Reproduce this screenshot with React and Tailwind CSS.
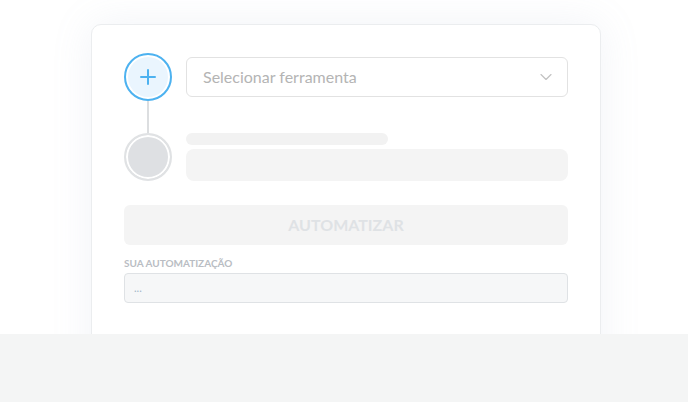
import { ChevronDown, Plus } from 'lucide-react';

export default function App() {
  return (
    <div className="w-[688px] h-[402px] bg-white">
      {/* top area with card, cut off by the gray band */}
      <div className="h-[334px] overflow-hidden pt-6 font-['Lato',sans-serif]">
        <div className="ml-[91px] w-[510px] h-[360px] rounded-[10px] border border-[#ebedef] bg-white px-8 pt-7 shadow-[0_0_40px_rgba(150,165,190,0.13)]">
          {/* step 1 */}
          <div className="flex items-center gap-[14px]">
            <div className="flex h-12 w-12 shrink-0 items-center justify-center rounded-full border-2 border-[#4db2f0] bg-[#eaf5fe] ring-2 ring-inset ring-white">
              <Plus className="h-[24px] w-[24px] text-[#4db2f0]" strokeWidth={2} />
            </div>
            <div className="flex h-10 flex-1 items-center justify-between rounded-[6px] border border-[#e2e2e2] pl-4 pr-[11px]">
              <span className="text-[16px] text-[#b4b4b4]">Selecionar ferramenta</span>
              <ChevronDown className="h-[20px] w-[20px] text-[#c2c2c2]" strokeWidth={1.4} />
            </div>
          </div>
          {/* connector */}
          <div className="ml-[23px] h-8 w-[2px] bg-[#dcdee0]" />
          {/* step 2 */}
          <div className="flex items-center gap-[14px]">
            <div className="h-12 w-12 shrink-0 rounded-full border-2 border-[#e0e2e4] bg-[#dee0e3] ring-2 ring-inset ring-white" />
            <div className="flex flex-1 flex-col gap-1">
              <div className="h-3 w-[202px] rounded-full bg-[#f2f2f2]" />
              <div className="h-8 rounded-[8px] bg-[#f4f4f4]" />
            </div>
          </div>
          {/* button */}
          <button className="mt-6 flex h-10 w-full items-center justify-center rounded-[6px] bg-[#f4f4f4] text-[16px] font-bold text-[#dfe2e5]">
            AUTOMATIZAR
          </button>
          <div className="mt-[10px] text-[10px] font-bold leading-[16px] text-[#b9bdc3]">SUA AUTOMATIZAÇÃO</div>
          <div className="mt-[2px] flex h-[30px] items-center rounded-[4px] border border-[#dfe2e5] bg-[#f6f7f8] px-[9px] text-[11px] text-[#9fb6c9]">
            ...
          </div>
        </div>
      </div>
      <div className="h-[68px] bg-[#f4f5f5]" />
    </div>
  );
}
